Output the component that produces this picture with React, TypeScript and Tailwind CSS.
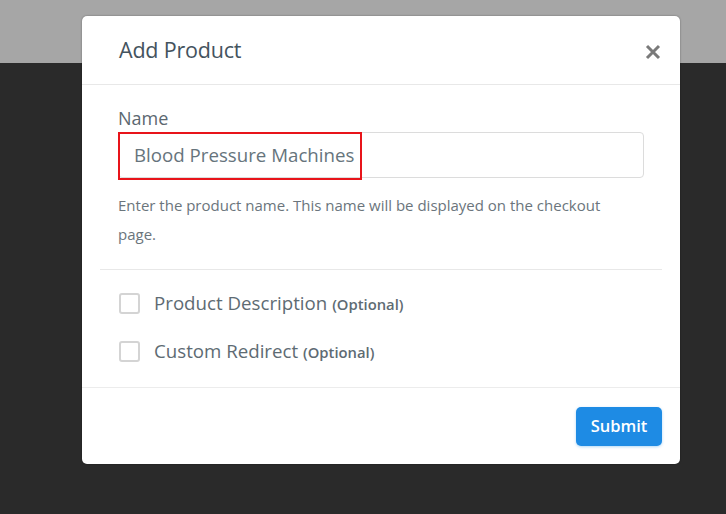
export default function App() {
  return (
    <div
      className="relative w-[726px] h-[514px] overflow-hidden bg-[#2a2a2a]"
      style={{ fontFamily: "'Open Sans', Lato, sans-serif" }}
    >
      <div className="h-[63px] bg-[#a6a6a6]" />

      <div className="absolute left-[82px] top-[16px] w-[598px] rounded-[5px] bg-white shadow-[0_0_2px_rgba(0,0,0,0.4)]">
        <div className="flex h-[69px] items-center justify-between border-b border-[#e8e8e8] pl-[37px] pr-[19px]">
          <h2 className="pt-[1px] text-[21.5px] font-medium tracking-[-0.2px] text-[#44535e]">Add Product</h2>
          <svg width="16" height="16" viewBox="0 0 16 16" className="mt-[3px]">
            <path d="M2 2 L14 14 M14 2 L2 14" stroke="#7a7a7a" strokeWidth="3" strokeLinecap="butt" />
          </svg>
        </div>

        <div className="pt-[20px]">
          <div className="px-[36px]">
            <label className="block text-[18px] leading-[26px] font-medium text-[#5b6770]">Name</label>
            <div className="relative mt-[1px] h-[46px] rounded-[4px] border border-[#dcdcdc]">
              <div className="absolute -left-[1px] -top-[1px] h-[48px] w-[244px] border-2 border-[#e8141a]" />
              <div className="pl-[15px] text-[18.7px] leading-[44px] text-[#66747c]">Blood Pressure Machines</div>
            </div>
            <p className="mt-[13px] max-w-[500px] text-[15px] leading-[29px] text-[#6b757c]">
              Enter the product name. This name will be displayed on the checkout page.
            </p>
          </div>

          <div className="mx-[18px] mt-[20px] border-t border-[#e8e8e8]" />

          <div className="px-[37px] pt-[19px] pb-[21px]">
            <div className="flex items-center gap-[14px]">
              <span className="h-[21px] w-[21px] rounded-[3px] border-2 border-[#d4d4d4]" />
              <span className="text-[18.7px] leading-[27px] text-[#5e6b73]">
                Product Description <span className="text-[14.8px] font-semibold">(Optional)</span>
              </span>
            </div>
            <div className="mt-[19px] flex items-center gap-[14px]">
              <span className="h-[21px] w-[21px] rounded-[3px] border-2 border-[#d4d4d4]" />
              <span className="text-[18.7px] leading-[27px] text-[#5e6b73]">
                Custom Redirect <span className="text-[14.8px] font-semibold">(Optional)</span>
              </span>
            </div>
          </div>
        </div>

        <div className="flex h-[77px] items-center justify-end border-t border-[#ececec] pr-[18px]">
          <button className="h-[39px] w-[86px] rounded-[5px] bg-[#1e8be4] text-[16.5px] font-semibold text-white shadow-[0_1px_3px_rgba(30,139,228,0.35)]">
            Submit
          </button>
        </div>
      </div>
    </div>
  );
}
